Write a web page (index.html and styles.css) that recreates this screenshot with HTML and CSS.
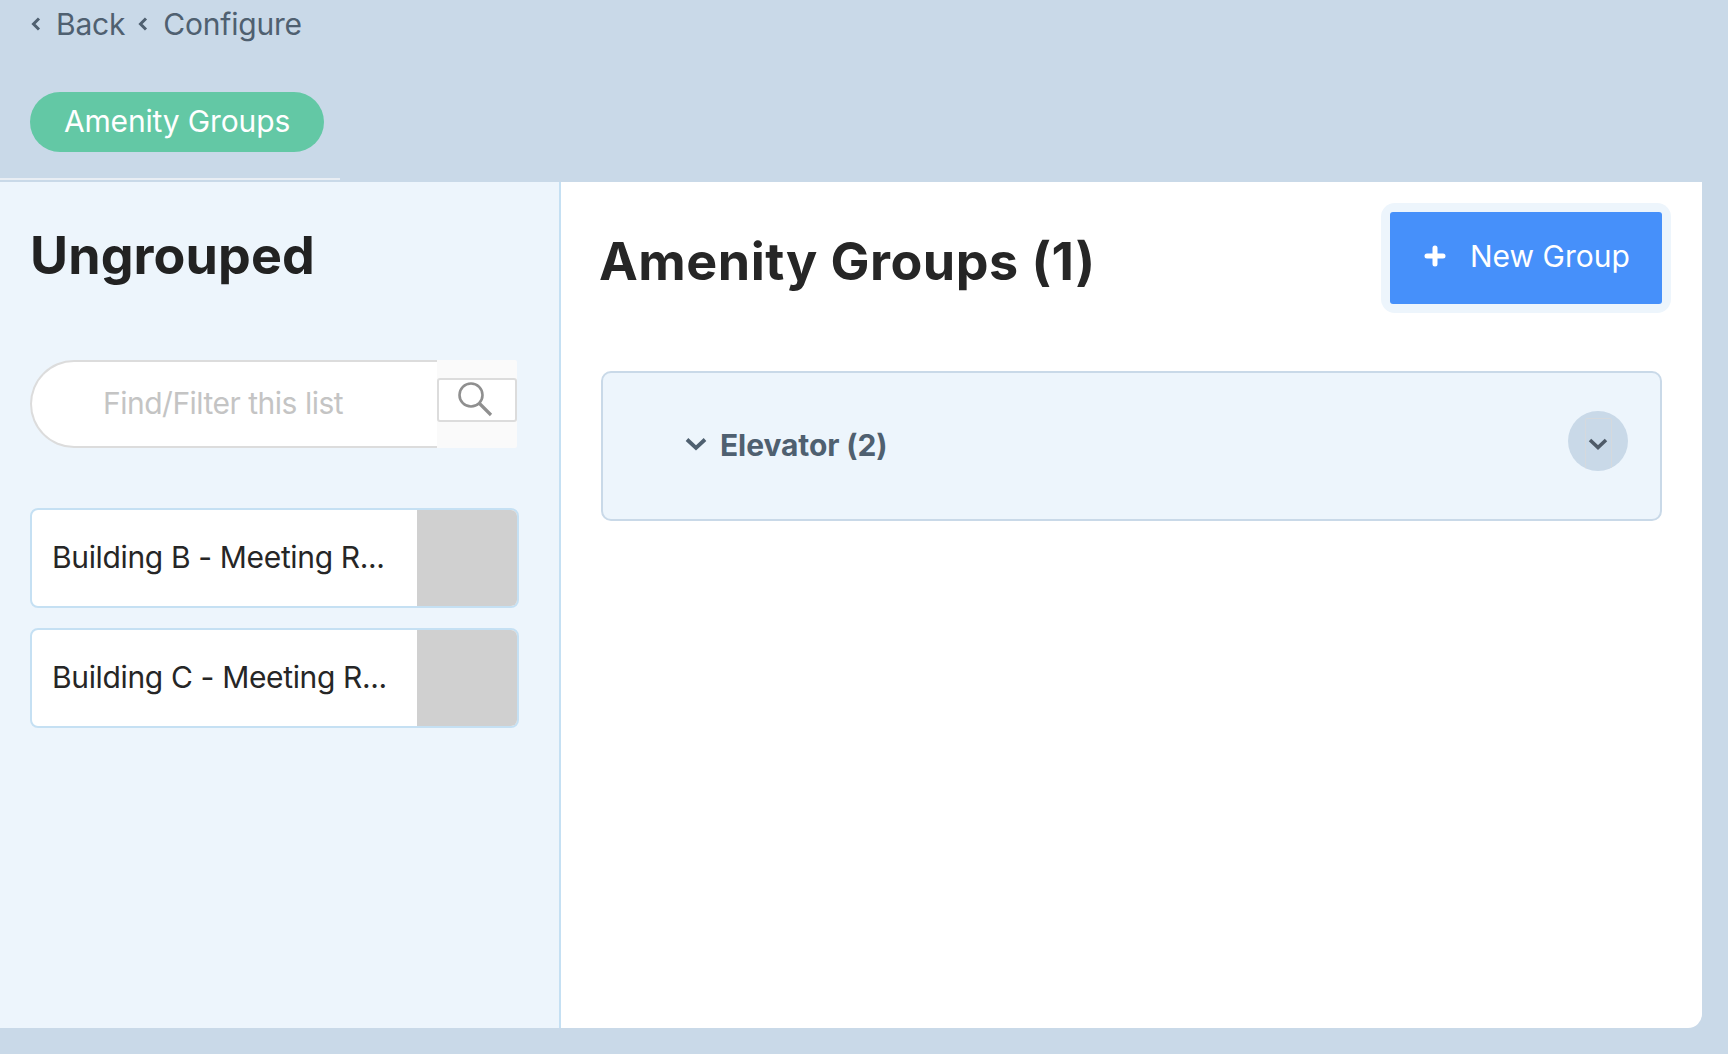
FILE: index.html
```html
<!DOCTYPE html>
<html lang="en">
<head>
<meta charset="utf-8">
<title>Amenity Groups</title>
<link rel="stylesheet" href="styles.css">
</head>
<body>
<div class="page">
  <nav class="crumbs">
    <svg class="crumb-icon" width="10" height="14" viewBox="0 0 10 14"><path d="M8 1.5 L2.5 7 L8 12.5" fill="none" stroke="#4f6070" stroke-width="3"/></svg>
    <span class="crumb">Back</span>
    <svg class="crumb-icon crumb-icon-next" width="10" height="14" viewBox="0 0 10 14"><path d="M8 1.5 L2.5 7 L8 12.5" fill="none" stroke="#4f6070" stroke-width="3"/></svg>
    <span class="crumb">Configure</span>
  </nav>
  <div class="tabs">
    <span class="pill">Amenity Groups</span>
  </div>
  <main class="panel">
    <aside class="sidebar">
      <h2 class="side-title">Ungrouped</h2>
      <div class="search">
        <div class="search-input">Find/Filter this list</div>
        <div class="search-side">
          <div class="search-btn">
            <svg width="36" height="36" viewBox="0 0 36 36"><circle cx="14" cy="14" r="11.5" fill="none" stroke="#8f8f8f" stroke-width="2.6"/><path d="M22.5 22.5 L34 34" stroke="#8f8f8f" stroke-width="3.2" fill="none"/></svg>
          </div>
        </div>
      </div>
      <div class="items">
        <div class="item"><span class="item-name">Building B - Meeting R...</span><span class="item-handle"></span></div>
        <div class="item"><span class="item-name">Building C - Meeting R...</span><span class="item-handle"></span></div>
      </div>
    </aside>
    <section class="content">
      <header class="content-head">
        <h1 class="content-title">Amenity Groups (1)</h1>
        <div class="btn-ring">
          <button class="btn" type="button">
            <svg width="22" height="22" viewBox="0 0 22 22"><path d="M11 3 V19 M3 11 H19" stroke="#fff" stroke-width="5" stroke-linecap="round" fill="none"/></svg>
            <span>New Group</span>
          </button>
        </div>
      </header>
      <div class="group">
        <svg class="group-chevron" width="22" height="14" viewBox="0 0 22 14"><path d="M2 2.5 L11 11 L20 2.5" fill="none" stroke="#4f6070" stroke-width="3.8"/></svg>
        <span class="group-name">Elevator (2)</span>
        <span class="circle">
          <span class="circle-inner">
            <svg width="20" height="12" viewBox="0 0 20 12"><path d="M2 2 L10 9.5 L18 2" fill="none" stroke="#4f5b68" stroke-width="3.6"/></svg>
          </span>
        </span>
      </div>
    </section>
  </main>
</div>
</body>
</html>
```

FILE: styles.css
```css
* { box-sizing: border-box; }
html, body { margin: 0; padding: 0; height: 100%; }
body { background: #c9d9e8; font-family: Inter, Lato, sans-serif; color: #262626; overflow: hidden; }
.page { width: 1728px; height: 1054px; padding-bottom: 26px; display: flex; flex-direction: column; }

.crumbs { height: 92px; padding: 5px 0 0 31px; display: flex; align-items: flex-start; color: #4f6070; font-size: 30px; line-height: 38px; flex: none; }
.crumb-icon { margin-top: 12px; flex: none; }
.crumb { margin-left: 15px; letter-spacing: -0.2px; }
.crumb-icon-next { margin-left: 13px; }

.tabs { height: 88px; width: 340px; border-bottom: 2px solid #e9eef4; padding-left: 30px; flex: none; }
.pill { display: inline-flex; width: 294px; height: 60px; align-items: center; justify-content: center; border-radius: 30px; background: #63c8a5; color: #fff; font-size: 30px; letter-spacing: -0.15px; padding-bottom: 3px; }

.panel { flex: 1; margin: 2px 26px 0 0; background: #fff; border-radius: 0 0 14px 0; display: flex; overflow: hidden; }

.sidebar { width: 561px; flex: none; background: #edf5fc; border-right: 2px solid #c5e0f3; padding: 42px 0 0 30px; }
.side-title { margin: 0 0 0 0; font-size: 52px; line-height: 64px; font-weight: 700; letter-spacing: 0.1px; color: #222; height: 72px; }

.search { display: flex; margin-top: 64px; width: 487px; height: 88px; }
.search-input { width: 407px; height: 88px; background: #fff; border: 2px solid #dcdcdc; border-right: 0; border-radius: 44px 0 0 44px; color: #c4c4c4; font-size: 30px; letter-spacing: -0.5px; line-height: 83px; padding-left: 71px; }
.search-side { width: 80px; height: 88px; background: #fafafa; border-radius: 0 2px 2px 0; }
.search-btn { margin-top: 18px; width: 80px; height: 44px; background: #fff; border: 2px solid #dcdcdc; border-radius: 3px; display: flex; justify-content: center; padding: 1px 4px 0 0; }

.items { margin-top: 60px; display: flex; flex-direction: column; gap: 20px; width: 489px; }
.item { height: 100px; display: flex; background: #fff; border: 2px solid #c5e0f3; border-radius: 8px; overflow: hidden; }
.item-name { flex: 1; padding-left: 20px; font-size: 30px; letter-spacing: -0.35px; line-height: 94px; color: #262626; white-space: nowrap; }
.item-handle { width: 100px; flex: none; background: #d0d0d0; }

.content { flex: 1; padding: 21px 40px 0 40px; }
.content-head { display: flex; justify-content: space-between; align-items: flex-start; height: 168px; }
.content-title { margin: 27px 0 0 -2px; font-size: 52px; line-height: 64px; font-weight: 700; letter-spacing: 0.5px; color: #262626; }
.btn-ring { padding: 9px; background: #edf5fc; border-radius: 14px; margin-right: -9px; }
.btn { display: flex; align-items: center; gap: 24px; width: 272px; height: 92px; padding: 0 0 4px 34px; border: 0; background: #4690fa; color: #fff; font-family: inherit; font-size: 30px; border-radius: 3px; }

.group { height: 150px; display: flex; align-items: center; background: #edf5fc; border: 2px solid #c9d9e8; border-radius: 10px; padding: 0 32px 0 82px; }
.group-chevron { flex: none; margin-bottom: 4px; }
.group-name { margin-left: 13px; flex: 1; font-size: 30px; font-weight: 700; letter-spacing: -0.1px; color: #4f6070; padding-bottom: 3px; }
.circle { width: 60px; height: 60px; border-radius: 50%; background: #c9d9e8; overflow: hidden; display: flex; justify-content: center; flex: none; margin-bottom: 10px; }
.circle-inner { width: 27px; height: 60px; margin-top: 7px; border: 1px solid #d5d9dd; border-radius: 2px; display: flex; justify-content: center; padding-top: 19px; }
.circle-inner svg { flex: none; }
```
